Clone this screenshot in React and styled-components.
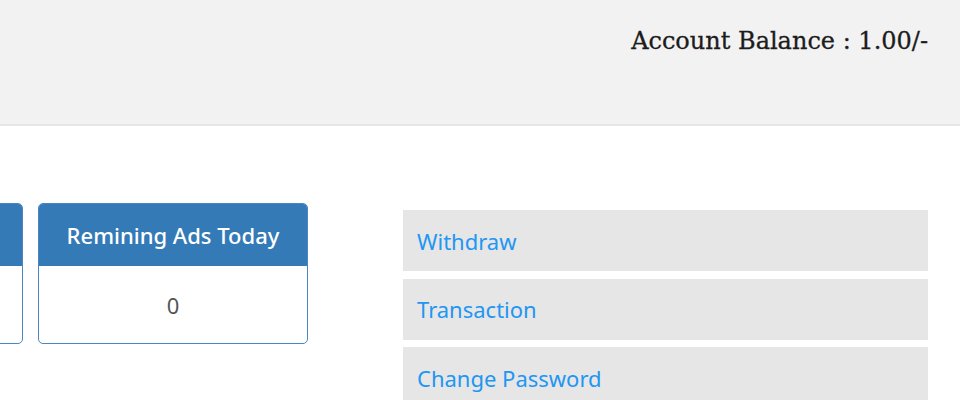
import React from 'react';
import styled, { createGlobalStyle } from 'styled-components';

const GlobalStyle = createGlobalStyle`
  html, body {
    margin: 0;
    padding: 0;
    background: #fff;
    font-family: 'Noto Sans', 'Open Sans', sans-serif;
    overflow: hidden;
  }
`;

const TopBar = styled.header`
  height: 126px;
  box-sizing: border-box;
  background: #f2f2f2;
  border-bottom: 2px solid #e6e6e6;
  display: flex;
  justify-content: flex-end;
  padding: 23px 32px 0 0;
`;

const Balance = styled.h3`
  margin: 0;
  font-family: 'DejaVu Serif', 'Liberation Serif', serif;
  font-weight: normal;
  font-size: 24px;
  line-height: 36px;
  color: #1c1c1c;
  -webkit-text-stroke: 0.3px #1c1c1c;
`;

const Main = styled.main`
  display: flex;
`;

const StatsColumn = styled.section`
  width: 403px;
  overflow: hidden;
  padding-top: 77px;
`;

const CardRow = styled.div`
  display: flex;
  gap: 15px;
  margin-left: -247px;
`;

const StatCard = styled.div`
  flex: 0 0 270px;
  height: 141px;
  box-sizing: border-box;
  border: 1px solid #4a87c0;
  border-radius: 5px;
  overflow: hidden;
  display: flex;
  flex-direction: column;
`;

const CardHead = styled.div`
  height: 62px;
  background: #337ab7;
  color: #fff;
  font-size: 22px;
  font-weight: 500;
  display: flex;
  align-items: center;
  justify-content: center;
`;

const CardBody = styled.div`
  flex: 1;
  display: flex;
  align-items: center;
  justify-content: center;
  color: #555;
  font-size: 22px;
`;

const Menu = styled.nav`
  width: 525px;
  padding-top: 84px;
  display: flex;
  flex-direction: column;
  gap: 7.5px;
`;

const MenuItem = styled.a`
  height: 61px;
  flex-shrink: 0;
  background: #e6e6e6;
  padding-left: 14px;
  display: flex;
  align-items: center;
  color: #2196f3;
  font-size: 22px;
  text-decoration: none;
`;

const stats = [
  { title: 'Total Ads Viewed', value: 0 },
  { title: 'Remining Ads Today', value: 0 },
];

const links = ['Withdraw', 'Transaction', 'Change Password'];

export default function App() {
  return (
    <>
      <GlobalStyle />
      <TopBar>
        <Balance>Account Balance : 1.00/-</Balance>
      </TopBar>
      <Main>
        <StatsColumn>
          <CardRow>
            {stats.map((s) => (
              <StatCard key={s.title}>
                <CardHead>{s.title}</CardHead>
                <CardBody>{s.value}</CardBody>
              </StatCard>
            ))}
          </CardRow>
        </StatsColumn>
        <Menu>
          {links.map((l) => (
            <MenuItem key={l} href="#">
              {l}
            </MenuItem>
          ))}
        </Menu>
      </Main>
    </>
  );
}
